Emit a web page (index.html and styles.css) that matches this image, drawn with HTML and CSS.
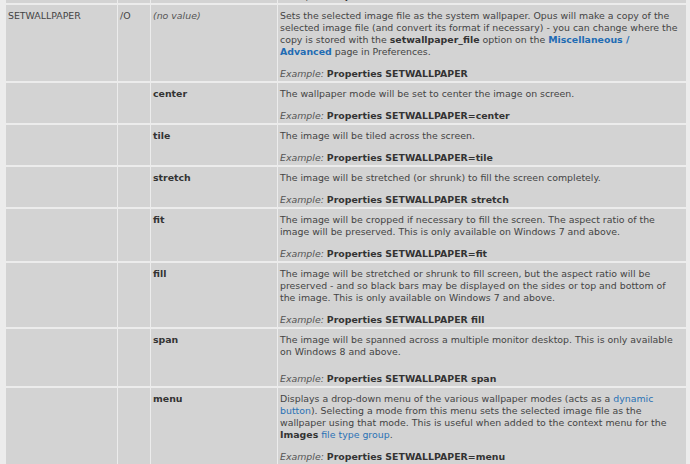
FILE: index.html
```html
<!DOCTYPE html>
<html>
<head>
<meta charset="utf-8">
<link rel="stylesheet" href="styles.css">
</head>
<body>
<div class="page">
<table class="cmd">
  <colgroup><col class="c1"><col class="c2"><col class="c3"><col class="c4"></colgroup>
  <tr class="prev">
    <td></td><td></td><td></td>
    <td><p class="ex"><i>Example:</i> <b>Properties SETVARIABLE "Sets SETVARIABLE=FOOBLE" SHIFT</b></p></td>
  </tr>
  <tr>
    <td>SETWALLPAPER</td>
    <td>/O</td>
    <td><i>(no value)</i></td>
    <td>
      <p>Sets the selected image file as the system wallpaper. Opus will make a copy of the selected image file (and convert its format if necessary) - you can change where the copy is stored with the <b>setwallpaper_file</b> option on the <a class="strong" href="#">Miscellaneous / Advanced</a> page in Preferences.</p>
      <p class="ex"><i>Example:</i> <b>Properties SETWALLPAPER</b></p>
    </td>
  </tr>
  <tr>
    <td></td><td></td><td><b>center</b></td>
    <td>
      <p>The wallpaper mode will be set to center the image on screen.</p>
      <p class="ex"><i>Example:</i> <b>Properties SETWALLPAPER=center</b></p>
    </td>
  </tr>
  <tr>
    <td></td><td></td><td><b>tile</b></td>
    <td>
      <p>The image will be tiled across the screen.</p>
      <p class="ex"><i>Example:</i> <b>Properties SETWALLPAPER=tile</b></p>
    </td>
  </tr>
  <tr>
    <td></td><td></td><td><b>stretch</b></td>
    <td>
      <p>The image will be stretched (or shrunk) to fill the screen completely.</p>
      <p class="ex"><i>Example:</i> <b>Properties SETWALLPAPER stretch</b></p>
    </td>
  </tr>
  <tr>
    <td></td><td></td><td><b>fit</b></td>
    <td>
      <p>The image will be cropped if necessary to fill the screen. The aspect ratio of the image will be preserved. This is only available on Windows 7 and above.</p>
      <p class="ex"><i>Example:</i> <b>Properties SETWALLPAPER=fit</b></p>
    </td>
  </tr>
  <tr>
    <td></td><td></td><td><b>fill</b></td>
    <td>
      <p>The image will be stretched or shrunk to fill screen, but the aspect ratio will be preserved - and so black bars may be displayed on the sides or top and bottom of the&nbsp;image. This is only available on Windows 7 and above.</p>
      <p class="ex"><i>Example:</i> <b>Properties SETWALLPAPER fill</b></p>
    </td>
  </tr>
  <tr>
    <td></td><td></td><td><b>span</b></td>
    <td>
      <p class="wide">The image will be spanned across a multiple monitor desktop. This is only available on Windows 8 and above.</p>
      <p class="ex"><i>Example:</i> <b>Properties SETWALLPAPER span</b></p>
    </td>
  </tr>
  <tr>
    <td></td><td></td><td><b>menu</b></td>
    <td>
      <p>Displays a drop-down menu of the various wallpaper modes (acts as a <a href="#">dynamic button</a>). Selecting a mode from this menu sets the selected image file as the wallpaper using that mode. This is useful when added to the context menu for the <b>Images</b> <a href="#">file type group</a>.</p>
      <p class="ex"><i>Example:</i> <b>Properties SETWALLPAPER=menu</b></p>
    </td>
  </tr>
  <tr class="next">
    <td></td><td></td><td><b>&nbsp;</b></td><td><p>&nbsp;</p></td>
  </tr>
</table>
</div>
</body>
</html>
```
FILE: styles.css
```css
html, body {
  margin: 0;
  padding: 0;
  background: #ececec;
  overflow: hidden;
}
.page {
  height: 464px;
  overflow: hidden;
  padding-left: 5px;
}
.cmd {
  border-collapse: separate;
  border-spacing: 1px 2px;
  table-layout: fixed;
  width: 682px;
  margin-top: -12px;
  font-family: "DejaVu Sans", Verdana, sans-serif;
  font-size: 9.4px;
  line-height: 12px;
  color: #444;
}
.c1 { width: 111px; }
.c2 { width: 32px; }
.c3 { width: 126px; }
.c4 { width: 408px; }
.cmd td {
  background: #d3d3d3;
  vertical-align: top;
  padding: 5px 2px 1px 2px;
}
.cmd p {
  margin: 0 0 10px 0;
}
.cmd p.ex {
  margin: 0;
}
.cmd p.wide {
  margin-bottom: 15px;
}
.cmd b {
  color: #333;
}
.cmd i {
  color: #555;
}
.cmd a {
  color: #2a72b5;
  text-decoration: none;
}
.cmd a.strong {
  font-weight: bold;
  color: #1f6cb4;
}
.prev td {
  padding-top: 0;
}
```
